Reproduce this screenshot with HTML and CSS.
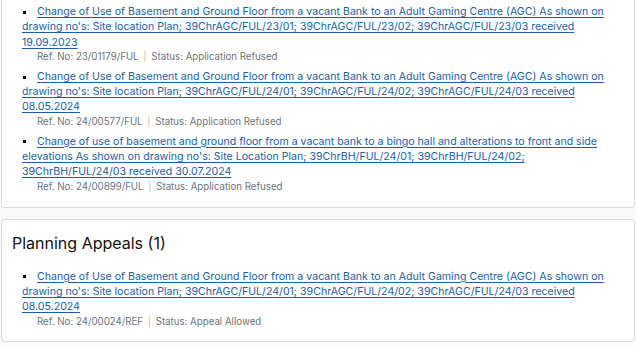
FILE: index.html
```html
<!DOCTYPE html>
<html lang="en">
<head>
    <meta charset="UTF-8">
    <meta name="viewport" content="width=device-width, initial-scale=1.0">
    <title>Planning History</title>
    <link rel="stylesheet" href="styles.css">
</head>
<body>

    <div class="container">
        <!-- Planning applications (continues from above) -->
        <section class="card card-cut">
            <ul class="plan-list">
                <li>
                    <a href="#">Change of Use of Basement and Ground Floor from a vacant Bank to an Adult Gaming Centre (AGC) As shown on drawing no's: Site location Plan; 39ChrAGC/FUL/23/01; 39ChrAGC/FUL/23/02; 39ChrAGC/FUL/23/03 received 19.09.2023</a>
                    <div class="meta">Ref. No: 23/01179/FUL <span class="sep">|</span> Status: Application Refused</div>
                </li>
                <li>
                    <a href="#">Change of Use of Basement and Ground Floor from a vacant Bank to an Adult Gaming Centre (AGC) As shown on drawing no's: Site location Plan; 39ChrAGC/FUL/24/01; 39ChrAGC/FUL/24/02; 39ChrAGC/FUL/24/03 received 08.05.2024</a>
                    <div class="meta">Ref. No: 24/00577/FUL <span class="sep">|</span> Status: Application Refused</div>
                </li>
                <li>
                    <a href="#">Change of use of basement and ground floor from a vacant bank to a bingo hall and alterations to front and side elevations As shown on drawing no's: Site Location Plan; 39ChrBH/FUL/24/01; 39ChrBH/FUL/24/02; 39ChrBH/FUL/24/03 received 30.07.2024</a>
                    <div class="meta">Ref. No: 24/00899/FUL <span class="sep">|</span> Status: Application Refused</div>
                </li>
            </ul>
        </section>

        <!-- Planning appeals -->
        <section class="card">
            <h2>Planning Appeals (1)</h2>
            <ul class="plan-list">
                <li>
                    <a href="#">Change of Use of Basement and Ground Floor from a vacant Bank to an Adult Gaming Centre (AGC) As shown on drawing no's: Site location Plan; 39ChrAGC/FUL/24/01; 39ChrAGC/FUL/24/02; 39ChrAGC/FUL/24/03 received 08.05.2024</a>
                    <div class="meta">Ref. No: 24/00024/REF <span class="sep">|</span> Status: Appeal Allowed</div>
                </li>
            </ul>
        </section>
    </div>

</body>
</html>
```

FILE: styles.css
```css
body {
    font-family: Inter, "Noto Sans", sans-serif;
    margin: 0;
    padding: 0;
    background-color: #fafafa;
    color: #212121;
}
.container {
    padding: 0 1px;
}
.card {
    background-color: #fff;
    border: 1px solid #dcdcdc;
    border-radius: 4px;
    padding: 14px 10px 13px;
    margin-bottom: 11px;
}
.card-cut {
    border-top: 0;
    border-top-left-radius: 0;
    border-top-right-radius: 0;
    padding-top: 4px;
    padding-bottom: 14px;
}
h2 {
    font-size: 16px;
    font-weight: 400;
    line-height: 19px;
    margin: 0 0 16px;
    color: #111;
}
.plan-list {
    list-style: none;
    margin: 0;
    padding-left: 10px;
}
.plan-list li {
    font-size: 10.6px;
    line-height: 15.3px;
    margin-bottom: 6px;
}
.plan-list li:last-child {
    margin-bottom: 0;
}
.plan-list li::before {
    content: "";
    display: inline-block;
    width: 3px;
    height: 3px;
    background-color: #000;
    vertical-align: middle;
    margin: 0 8px 0 1px;
}
.plan-list a {
    color: #1b5ea7;
    text-decoration: underline;
    text-underline-offset: 2px;
}
.meta {
    font-size: 9.7px;
    line-height: 13px;
    color: #6d7378;
    padding-left: 15px;
}
.sep {
    color: #c9b9a5;
    margin: 0 2px;
}
```
